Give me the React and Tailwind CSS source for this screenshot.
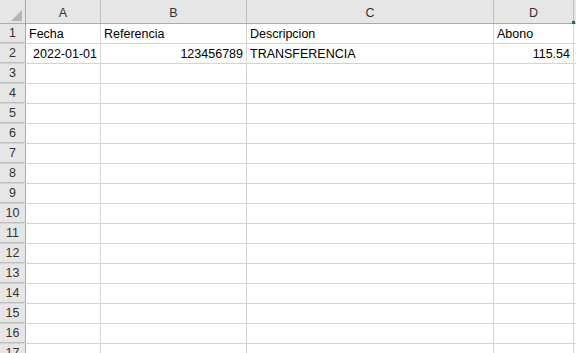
import React from 'react';

const COLS = [
  { key: 'A', width: 'w-[75px]' },
  { key: 'B', width: 'w-[146px]' },
  { key: 'C', width: 'w-[247px]' },
  { key: 'D', width: 'w-[80px]' },
];

const DATA = {
  1: { A: ['Fecha', 'l'], B: ['Referencia', 'l'], C: ['Descripcion', 'l'], D: ['Abono', 'l'] },
  2: { A: ['2022-01-01', 'r'], B: ['123456789', 'r'], C: ['TRANSFERENCIA', 'l'], D: ['115.54', 'r'] },
};

const ROWS = Array.from({ length: 17 }, (_, i) => i + 1);

function Cell({ width, value }) {
  const [text, align] = value || ['', 'l'];
  return (
    <div
      className={`${width} h-full shrink-0 border-r border-[#d4d4d4] flex items-center px-[3px] overflow-hidden whitespace-nowrap ${
        align === 'r' ? 'justify-end' : 'justify-start'
      }`}
    >
      {text}
    </div>
  );
}

export default function App() {
  return (
    <div
      className="relative w-[576px] h-[353px] overflow-hidden bg-white text-[12.5px] leading-[14px] text-black"
      style={{ fontFamily: '"Liberation Sans", Arial, sans-serif' }}
    >
      {/* Column headers */}
      <div className="flex h-[24px] bg-[#e6e6e6] border-b border-[#ababab] text-[#333]">
        <div className="w-[26px] h-full shrink-0 border-r border-[#ababab] flex items-end justify-end pr-[3px] pb-[2px]">
          <div className="w-0 h-0 border-l-[11px] border-l-transparent border-b-[11px] border-b-[#b4b4b4]" />
        </div>
        {COLS.map((c) => (
          <div
            key={c.key}
            className={`${c.width} h-full shrink-0 border-r border-[#bebebe] flex items-end justify-center pb-[3px]`}
          >
            {c.key}
          </div>
        ))}
        <div className="flex-1" />
      </div>

      {/* Rows */}
      {ROWS.map((r) => (
        <div key={r} className="flex h-[20px] border-b border-[#d4d4d4]">
          <div className="w-[26px] h-full shrink-0 bg-[#e6e6e6] border-r border-[#ababab] border-b border-b-[#bebebe] -mb-px flex items-center justify-center text-[#333]">
            {r}
          </div>
          {COLS.map((c) => (
            <Cell key={c.key} width={c.width} value={DATA[r]?.[c.key]} />
          ))}
          <div className="flex-1" />
        </div>
      ))}

      <div className="absolute left-[572px] top-[21px] w-[3px] h-[3px] bg-[#217346]" />
    </div>
  );
}
